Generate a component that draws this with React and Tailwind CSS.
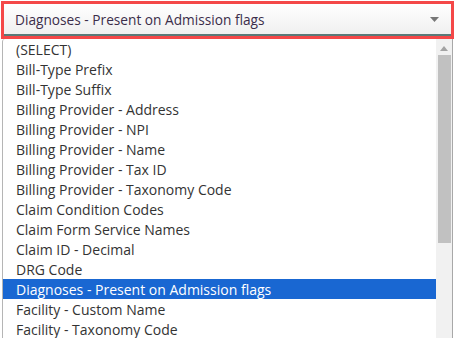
const items = [
  "(SELECT)",
  "Bill-Type Prefix",
  "Bill-Type Suffix",
  "Billing Provider - Address",
  "Billing Provider - NPI",
  "Billing Provider - Name",
  "Billing Provider - Tax ID",
  "Billing Provider - Taxonomy Code",
  "Claim Condition Codes",
  "Claim Form Service Names",
  "Claim ID - Decimal",
  "DRG Code",
  "Diagnoses - Present on Admission flags",
  "Facility - Custom Name",
  "Facility - Taxonomy Code",
];

const selected = "Diagnoses - Present on Admission flags";

export default function App() {
  return (
    <div
      className="w-[455px] h-[338px] overflow-hidden bg-white text-[#333]"
      style={{ fontFamily: '"Open Sans", sans-serif' }}
    >
      <div className="pt-[1px] pl-[1px] pr-[1px]">
        <div className="h-[38px] border-[3px] border-[#f44848]">
          <div className="h-[32px] flex items-center justify-between pl-[11px] pr-[12px] bg-gradient-to-b from-white to-[#f0f0f0] border-b-2 border-[#5a7a78]">
            <span className="text-[13.7px] text-[#3b2d4a] leading-none pt-[1px]">{selected}</span>
            <svg width="9" height="5" viewBox="0 0 9 5">
              <path d="M0 0H9L4.5 5Z" fill="#777" />
            </svg>
          </div>
        </div>
      </div>
      <div className="ml-[2px] w-[451px] flex border-l border-[#b5b5b5] rounded-tl-[3px]">
        <ul className="flex-1">
          {items.map((item) => (
            <li
              key={item}
              className={
                item === selected
                  ? "h-[20px] flex items-center pl-[13px] text-[14px] bg-[#1967d2] text-white"
                  : "h-[20px] flex items-center pl-[13px] text-[14px]"
              }
            >
              {item}
            </li>
          ))}
        </ul>
        <div className="w-[16px] bg-[#f1f1f1] flex flex-col items-center">
          <svg width="8" height="5" viewBox="0 0 8 5" className="mt-[7px]">
            <path d="M0 5H8L4 0Z" fill="#a3a3a3" />
          </svg>
          <div className="mt-[4px] w-[13px] h-[188px] bg-[#c1c1c1]" />
        </div>
        <div className="w-px bg-[#a8a8a8]" />
      </div>
    </div>
  );
}
